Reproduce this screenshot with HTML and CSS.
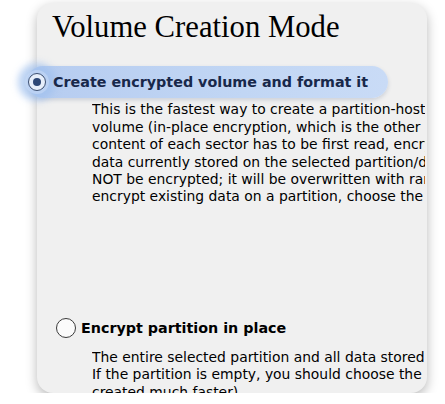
FILE: index.html
```html
<!DOCTYPE html>
<html lang="en">
<head>
<meta charset="utf-8">
<title>Volume Creation Mode</title>
<link rel="stylesheet" href="styles.css">
</head>
<body>
<div class="card">
  <h1 class="title">Volume Creation Mode</h1>
  <div class="option option-selected">
    <span class="radio radio-on"><span class="dot"></span></span>
    <span class="label">Create encrypted volume and format it</span>
  </div>
  <div class="desc desc-first">
    <div>This is the fastest way to create a partition-hosted or device-hosted</div>
    <div>volume (in-place encryption, which is the other option, is slower because</div>
    <div>content of each sector has to be first read, encrypted, and then written). Any</div>
    <div>data currently stored on the selected partition/device will be lost (the data will</div>
    <div>NOT be encrypted; it will be overwritten with random data). If you want to</div>
    <div>encrypt existing data on a partition, choose the other option.</div>
  </div>
  <div class="option option-plain">
    <span class="radio"></span>
    <span class="label">Encrypt partition in place</span>
  </div>
  <div class="desc desc-last">
    <div>The entire selected partition and all data stored on it will be encrypted in place.</div>
    <div>If the partition is empty, you should choose the other option (the volume will be</div>
    <div>created much faster).</div>
  </div>
</div>
</body>
</html>
```
FILE: styles.css
```css
html, body {
  margin: 0;
  padding: 0;
  background: #ffffff;
}

.card {
  box-sizing: border-box;
  width: 390px;
  height: 390px;
  margin: 3px 0 0 37px;
  padding: 0 2px 0 15px;
  background: #f0f0f0;
  border-radius: 16px;
  box-shadow: 0 4px 12px rgba(0, 0, 0, 0.28);
  display: flex;
  flex-direction: column;
}

.title {
  margin: 7px 0 0 0;
  font-family: "Liberation Serif", "Times New Roman", serif;
  font-weight: 400;
  font-size: 30.7px;
  line-height: 34px;
  color: #000000;
  white-space: nowrap;
  flex-shrink: 0;
}

.option {
  display: flex;
  align-items: center;
  height: 32px;
  flex-shrink: 0;
  font-family: "DejaVu Sans", sans-serif;
  font-weight: 700;
  font-size: 14.3px;
  line-height: 32px;
  white-space: nowrap;
}

.option-selected {
  box-sizing: border-box;
  width: 361.5px;
  margin: 22px 0 0 -25.5px;
  padding-left: 1.5px;
  border-radius: 16px;
  background: linear-gradient(90deg, #b6ccf0 0%, #c1d6f4 60%, #c9dbf6 100%);
  box-shadow: 0 2px 4px rgba(60, 80, 120, 0.2);
  color: #18284a;
}

.option-plain {
  margin: 106px 0 0 4px;
  color: #000000;
}

.radio {
  box-sizing: border-box;
  width: 20px;
  height: 20px;
  border-radius: 50%;
  border: 1.5px solid #3a3a3a;
  background: #fbfbfb;
  display: flex;
  align-items: center;
  justify-content: center;
  flex-shrink: 0;
}

.radio-on {
  width: 18px;
  height: 18px;
  border-color: #3c4f70;
  background: #e6eefa;
  box-shadow: 0 0 0 3px rgba(200, 218, 245, 0.6), 0 0 7px 10px rgba(160, 192, 238, 0.7);
}

.dot {
  width: 8px;
  height: 8px;
  border-radius: 50%;
  background: #2d4775;
}

.option-selected .label {
  margin-left: 7px;
}

.option-plain .label {
  margin-left: 5px;
}

.desc {
  margin-left: 40px;
  font-family: "DejaVu Sans", sans-serif;
  font-size: 13.9px;
  line-height: 17.4px;
  color: #000000;
  white-space: nowrap;
  overflow: hidden;
}

.desc-first {
  margin-top: 3.4px;
  flex-shrink: 0;
}

.desc-last {
  margin-top: 5px;
  flex: 1 1 0;
  min-height: 0;
}
```
